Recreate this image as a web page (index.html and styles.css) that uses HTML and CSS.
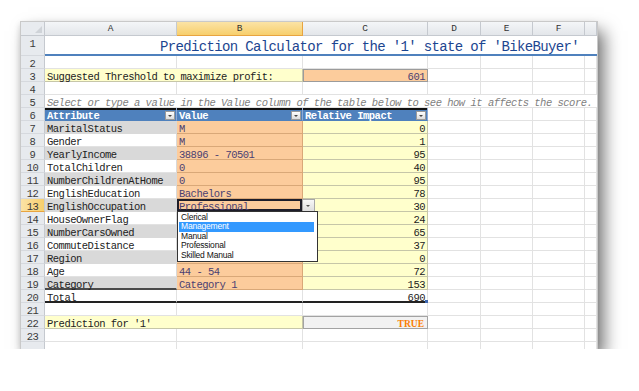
FILE: index.html
```html
<!DOCTYPE html>
<html lang="en">
<head>
    <meta charset="UTF-8">
    <meta name="viewport" content="width=device-width, initial-scale=1.0">
    <title>Prediction Calculator | BikeBuyer</title>
    <link rel="stylesheet" href="styles.css">
</head>
<body>
    <div class="sheet">
        <!-- column headers -->
        <div class="corner"></div>
        <div class="ch">A</div>
        <div class="ch on">B</div>
        <div class="ch">C</div>
        <div class="ch">D</div>
        <div class="ch">E</div>
        <div class="ch">F</div>
        <div class="ch"></div>

        <div class="rh">1</div>
        <div class="c title s7">Prediction Calculator for the '1' state of 'BikeBuyer'</div>

        <div class="rh">2</div>
        <div class="c"></div><div class="c"></div><div class="c"></div><div class="c"></div><div class="c"></div><div class="c"></div><div class="c"></div>

        <div class="rh">3</div>
        <div class="c note s2">Suggested Threshold to maximize profit:</div>
        <div class="c input box num">601</div>
        <div class="c"></div><div class="c"></div><div class="c"></div><div class="c"></div>

        <div class="rh">4</div>
        <div class="c"></div><div class="c"></div><div class="c"></div><div class="c"></div><div class="c"></div><div class="c"></div><div class="c"></div>

        <div class="rh">5</div>
        <div class="c hint s7">Select or type a value in the Value column of the table below to see how it affects the score.</div>

        <div class="rh">6</div>
        <div class="c th">Attribute<span class="filter"></span></div>
        <div class="c th">Value<span class="filter"></span></div>
        <div class="c th">Relative Impact<span class="filter"></span></div>
        <div class="c"></div><div class="c"></div><div class="c"></div><div class="c"></div>

        <div class="rh">7</div>
        <div class="c band">MaritalStatus</div>
        <div class="c input">M</div>
        <div class="c note num">0</div>
        <div class="c"></div><div class="c"></div><div class="c"></div><div class="c"></div>

        <div class="rh">8</div>
        <div class="c plain">Gender</div>
        <div class="c input">M</div>
        <div class="c note num">1</div>
        <div class="c"></div><div class="c"></div><div class="c"></div><div class="c"></div>

        <div class="rh">9</div>
        <div class="c band">YearlyIncome</div>
        <div class="c input">38896 - 70501</div>
        <div class="c note num">95</div>
        <div class="c"></div><div class="c"></div><div class="c"></div><div class="c"></div>

        <div class="rh">10</div>
        <div class="c plain">TotalChildren</div>
        <div class="c input">0</div>
        <div class="c note num">40</div>
        <div class="c"></div><div class="c"></div><div class="c"></div><div class="c"></div>

        <div class="rh">11</div>
        <div class="c band">NumberChildrenAtHome</div>
        <div class="c input">0</div>
        <div class="c note num">95</div>
        <div class="c"></div><div class="c"></div><div class="c"></div><div class="c"></div>

        <div class="rh">12</div>
        <div class="c plain">EnglishEducation</div>
        <div class="c input">Bachelors</div>
        <div class="c note num">78</div>
        <div class="c"></div><div class="c"></div><div class="c"></div><div class="c"></div>

        <div class="rh on">13</div>
        <div class="c band">EnglishOccupation</div>
        <div class="c input sel">Professional
            <span class="drop-btn"></span>
            <ul class="drop-list">
                <li>Clerical</li>
                <li class="hl">Management</li>
                <li>Manual</li>
                <li>Professional</li>
                <li>Skilled Manual</li>
            </ul>
        </div>
        <div class="c note num">30</div>
        <div class="c"></div><div class="c"></div><div class="c"></div><div class="c"></div>

        <!-- values of rows 14-16 sit under the open list -->
        <div class="rh">14</div>
        <div class="c plain">HouseOwnerFlag</div>
        <div class="c input"></div>
        <div class="c note num">24</div>
        <div class="c"></div><div class="c"></div><div class="c"></div><div class="c"></div>

        <div class="rh">15</div>
        <div class="c band">NumberCarsOwned</div>
        <div class="c input"></div>
        <div class="c note num">65</div>
        <div class="c"></div><div class="c"></div><div class="c"></div><div class="c"></div>

        <div class="rh">16</div>
        <div class="c plain">CommuteDistance</div>
        <div class="c input"></div>
        <div class="c note num">37</div>
        <div class="c"></div><div class="c"></div><div class="c"></div><div class="c"></div>

        <div class="rh">17</div>
        <div class="c band">Region</div>
        <div class="c input">North America</div>
        <div class="c note num">0</div>
        <div class="c"></div><div class="c"></div><div class="c"></div><div class="c"></div>

        <div class="rh">18</div>
        <div class="c plain">Age</div>
        <div class="c input">44 - 54</div>
        <div class="c note num">72</div>
        <div class="c"></div><div class="c"></div><div class="c"></div><div class="c"></div>

        <div class="rh">19</div>
        <div class="c band last">Category</div>
        <div class="c input">Category 1</div>
        <div class="c note num">153</div>
        <div class="c"></div><div class="c"></div><div class="c"></div><div class="c"></div>

        <div class="rh">20</div>
        <div class="c total">Total</div>
        <div class="c total"></div>
        <div class="c total num handle">690</div>
        <div class="c"></div><div class="c"></div><div class="c"></div><div class="c"></div>

        <div class="rh">21</div>
        <div class="c"></div><div class="c"></div><div class="c"></div><div class="c"></div><div class="c"></div><div class="c"></div><div class="c"></div>

        <div class="rh">22</div>
        <div class="c note s2">Prediction for '1'</div>
        <div class="c calc num">TRUE</div>
        <div class="c"></div><div class="c"></div><div class="c"></div><div class="c"></div>

        <div class="rh">23</div>
        <div class="c"></div><div class="c"></div><div class="c"></div><div class="c"></div><div class="c"></div><div class="c"></div><div class="c"></div>

        <div class="rh cut"></div>
        <div class="c"></div><div class="c"></div><div class="c"></div><div class="c"></div><div class="c"></div><div class="c"></div><div class="c"></div>
    </div>
</body>
</html>
```

FILE: styles.css
```css
body {
    margin: 0;
    padding: 22px 0 0 21px;
    background: #fff;
}

.sheet {
    display: grid;
    grid-template-columns: 24px 132px 126px 125px 53px 52px 52px 12px;
    grid-template-rows: 14px 20px;
    grid-auto-rows: 13px;
    width: 576px;
    height: 327px;
    overflow: hidden;
    background: #fff;
    box-shadow: 0 0 0 1px #c9c9c9, 7px 9px 16px rgba(0, 0, 0, 0.55), -1px 2px 6px rgba(0, 0, 0, 0.15);
    font-family: "Liberation Mono", monospace;
    color: #222;
}

.sheet > div {
    box-sizing: border-box;
}

/* headers */
.corner {
    position: relative;
    background: #e8ebef;
    border-right: 1px solid #c5c9cf;
    border-bottom: 1px solid #c5c9cf;
}

.corner::after {
    content: "";
    position: absolute;
    right: 2px;
    bottom: 2px;
    border-left: 7px solid transparent;
    border-bottom: 7px solid #cfd3d8;
}

.ch {
    background: linear-gradient(#f4f6f8, #e3e6ea);
    border-right: 1px solid #c5c9cf;
    border-bottom: 1px solid #c5c9cf;
    text-align: center;
    font-size: 9.5px;
    line-height: 13px;
    color: #333;
}

.ch.on {
    background: linear-gradient(#fbe3a6, #f7cf6c);
    border-right-color: #e8a440;
    border-bottom-color: #e8a440;
}

.rh {
    background: #e7eaee;
    border-right: 1px solid #c5c9cf;
    border-bottom: 1px solid #d6d9de;
    text-align: center;
    font-size: 10.5px;
    letter-spacing: -0.5px;
    line-height: 12px;
    padding-top: 2px;
    color: #3a3a3a;
}

.rh.on {
    background: linear-gradient(90deg, #fbe3a6, #f7cf6c);
    border-bottom-color: #e8a440;
}

/* cells */
.c {
    position: relative;
    border-right: 1px solid #e2e2e2;
    border-bottom: 1px solid #e2e2e2;
    padding: 2px 2px 0;
    font-size: 10.5px;
    letter-spacing: -0.5px;
    line-height: 12px;
    white-space: nowrap;
}

.s2 { grid-column: span 2; }
.s7 { grid-column: span 7; }
.num { text-align: right; }

.title {
    border-right: none;
    border-bottom: 2px solid #4f81bd;
    text-align: right;
    padding: 4px 18px 0 0;
    font-size: 14px;
    letter-spacing: -0.64px;
    line-height: 14px;
    color: #1c4590;
}

.hint {
    border-right: none;
    font-style: italic;
    color: #7f7f7f;
}

.note {
    background: #ffffcc;
    border-right-color: #c6c6a8;
    border-bottom-color: #c6c6a8;
}

.input {
    background: #fccc9c;
    border-right-color: #d9a878;
    border-bottom-color: #d9a878;
    color: #4b3f72;
}

.input.box {
    border: 1px solid #9b9b9b;
    padding-top: 1px;
}

.calc {
    background: #f2f2f2;
    border: 1px solid #a3a3a3;
    padding: 1px 3px 0;
    font-family: "Liberation Serif", serif;
    font-weight: bold;
    font-size: 9.5px;
    letter-spacing: 0;
    color: #fa7d00;
}

.band {
    background: #d9d9d9;
    border-right-color: #d9d9d9;
    border-bottom-color: #d9d9d9;
}

.plain {
    border-right-color: #d9d9d9;
}

.last {
    border-bottom: 2px solid #4a4a4a;
}

.total {
    border-bottom: 2px solid #222;
}

.handle::after {
    content: "";
    position: absolute;
    right: -1px;
    bottom: -2px;
    width: 3px;
    height: 3px;
    background: #3d66b0;
}

/* table header row */
.th {
    background: #4f81bd;
    border-right-color: #8eaad6;
    border-bottom-color: #4f81bd;
    box-shadow: inset 0 2px 0 #111;
    color: #fff;
    font-weight: bold;
}

.filter {
    position: absolute;
    right: 1px;
    top: 3px;
    width: 10px;
    height: 9px;
    box-sizing: border-box;
    background: linear-gradient(#ffffff, #dcdcdc);
    border: 1px solid #9a9a9a;
}

.filter::after {
    content: "";
    position: absolute;
    left: 2px;
    top: 3px;
    border-left: 2px solid transparent;
    border-right: 2px solid transparent;
    border-top: 2px solid #444;
}

/* selected cell with its validation list */
.sel {
    box-shadow: inset 0 0 0 2px #1e1e2a;
    z-index: 2;
}

.drop-btn {
    position: absolute;
    left: 100%;
    top: 0;
    width: 13px;
    height: 13px;
    box-sizing: border-box;
    background: linear-gradient(#f7f7f7, #dedede);
    border: 1px solid #a8a8a8;
}

.drop-btn::after {
    content: "";
    position: absolute;
    left: 3px;
    top: 5px;
    border-left: 2.5px solid transparent;
    border-right: 2.5px solid transparent;
    border-top: 2.5px solid #555;
}

.drop-list {
    position: absolute;
    left: 0;
    top: 100%;
    width: 141px;
    margin: 0;
    padding: 1px;
    box-sizing: border-box;
    list-style: none;
    background: #fff;
    border: 1px solid #333;
    font-family: "Liberation Sans", sans-serif;
    font-size: 8.5px;
    letter-spacing: -0.2px;
    color: #111;
}

.drop-list li {
    height: 9.4px;
    line-height: 9.4px;
    padding-left: 2px;
    margin-right: 2px;
}

.drop-list li.hl {
    background: #3399ff;
    color: #fff;
}
```
